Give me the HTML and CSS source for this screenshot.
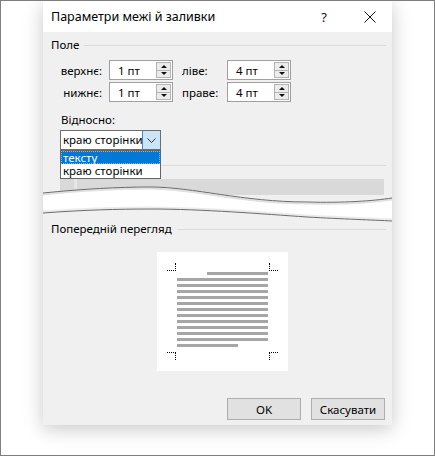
FILE: index.html
```html
<!DOCTYPE html>
<html lang="uk">
<head>
<meta charset="utf-8">
<title>Параметри межі й заливки</title>
<link rel="stylesheet" href="styles.css">
</head>
<body>
<div class="frame">
  <div class="dialog">
    <div class="titlebar">
      <span class="title">Параметри межі й заливки</span>
      <span class="help">?</span>
      <svg class="close" width="12" height="12" viewBox="0 0 12 12"><path d="M0.5 0.5 L11.5 11.5 M11.5 0.5 L0.5 11.5" stroke="#111" stroke-width="1" fill="none"/></svg>
    </div>
    <div class="upper">
      <div class="group-head"><span>Поле</span><i class="rule"></i></div>
      <div class="margins">
        <label class="lab-r">верхнє:</label>
        <div class="spin"><span>1 пт</span><div class="arrows"><b class="up"></b><b class="down"></b></div></div>
        <label class="lab-l">ліве:</label>
        <div class="spin"><span>4 пт</span><div class="arrows"><b class="up"></b><b class="down"></b></div></div>
        <label class="lab-r">нижнє:</label>
        <div class="spin"><span>1 пт</span><div class="arrows"><b class="up"></b><b class="down"></b></div></div>
        <label class="lab-l">праве:</label>
        <div class="spin"><span>4 пт</span><div class="arrows"><b class="up"></b><b class="down"></b></div></div>
      </div>
      <div class="rel-label">Відносно:</div>
      <div class="combo-wrap">
        <div class="combo">
          <span class="combo-text">краю сторінки</span>
          <span class="combo-btn"><svg width="9" height="5" viewBox="0 0 9 5"><path d="M0.5 0.5 L4.5 4.5 L8.5 0.5" stroke="#333" stroke-width="1" fill="none"/></svg></span>
        </div>
        <ul class="droplist">
          <li class="sel"><span>тексту</span></li>
          <li>краю сторінки</li>
        </ul>
      </div>
      <div class="sep"></div>
    </div>
    <svg class="tear" width="349" height="46" viewBox="0 0 349 46">
      <defs>
        <clipPath id="topclip"><path d="M0,0 H349 V22 C330,25 300,27 264,26 C200,26 150,11 107,11 C75,11 40,13 0,17 Z"/></clipPath>
      </defs>
      <path d="M0,0 H349 V22 C330,25 300,27 264,26 C200,26 150,11 107,11 C75,11 40,13 0,17 Z" fill="#f0f0f0"/>
      <g clip-path="url(#topclip)">
        <rect x="17" y="3" width="14" height="16" fill="#d9d9d9"/>
        <rect x="31" y="3" width="3" height="16" fill="#e6e6e6"/>
        <rect x="34" y="3" width="307" height="16" fill="#d9d9d9"/>
      </g>
      <path d="M0,18.5 C40,14.5 75,12.5 107,12.5 C150,12.5 200,27.5 264,27.5 C300,28.5 330,26.5 349,23.5" stroke="#000" stroke-opacity="0.12" stroke-width="2" fill="none"/>
      <path d="M0,17 C40,13 75,11 107,11 C150,11 200,26 264,26 C300,27 330,25 349,22" stroke="#6a6a6a" stroke-width="1" fill="none"/>
      <path d="M0,37 C40,34 75,33 107,33 C160,33 220,38 264,41 C300,43 330,44 349,45 V46 H0 Z" fill="#f0f0f0"/>
      <path d="M0,35.5 C40,32.5 75,31.5 107,31.5 C160,31.5 220,36.5 264,39.5 C300,41.5 330,42.5 349,43.5" stroke="#000" stroke-opacity="0.08" stroke-width="2" fill="none"/>
      <path d="M0,37 C40,34 75,33 107,33 C160,33 220,38 264,41 C300,43 330,44 349,45" stroke="#6a6a6a" stroke-width="1" fill="none"/>
    </svg>
    <div class="lower">
      <div class="group-head"><span>Попередній перегляд</span><i class="rule"></i></div>
      <div class="preview">
        <i class="corner tl"></i><i class="corner tr"></i><i class="corner bl"></i><i class="corner br"></i>
        <div class="lines">
          <i class="ln first"></i>
          <i class="ln"></i><i class="ln"></i><i class="ln"></i><i class="ln"></i><i class="ln"></i><i class="ln"></i>
          <i class="ln"></i><i class="ln"></i><i class="ln"></i><i class="ln"></i><i class="ln"></i>
          <i class="ln last"></i>
        </div>
      </div>
      <div class="buttons">
        <button class="btn">OK</button>
        <button class="btn">Скасувати</button>
      </div>
    </div>
  </div>
</div>
</body>
</html>
```

FILE: styles.css
```css
* { box-sizing: border-box; }
html, body { margin: 0; padding: 0; background: #fff; }
body {
  font-family: "Noto Sans", "Open Sans", sans-serif;
  font-size: 11.5px;
  color: #000;
}
.frame {
  width: 435px;
  height: 456px;
  border: 1px solid #7f7f7f;
  background: #fff;
  overflow: hidden;
  padding-left: 42px;
}
.dialog {
  width: 349px;
  height: 424px;
  display: flex;
  flex-direction: column;
  box-shadow: 0 4px 18px rgba(0,0,0,0.22);
  background: transparent;
}
.titlebar {
  height: 31px;
  background: #fff;
  display: flex;
  align-items: center;
  padding-left: 8px;
  flex: none;
}
.title { font-size: 12.5px; flex: 1; }
.help { font-size: 13px; margin-right: 37px; color: #111; }
.close { margin-right: 16px; }
.upper {
  background: #f0f0f0;
  height: 144px;
  padding: 6px 6px 0 8px;
  position: relative;
  flex: none;
}
.group-head {
  display: flex;
  align-items: center;
  height: 14px;
  line-height: 14px;
}
.group-head .rule {
  flex: 1;
  height: 1px;
  background: #dcdcdc;
  margin-left: 5px;
}
.margins {
  display: grid;
  grid-template-columns: 58px 64px 54px 64px;
  grid-auto-rows: 20px;
  row-gap: 2px;
  margin-top: 8px;
  align-items: center;
}
.lab-r { text-align: right; padding-right: 7px; }
.lab-l { padding-left: 9px; }
.spin {
  height: 20px;
  background: #fff;
  border: 1px solid #a0a0a0;
  display: flex;
  align-items: center;
  padding-left: 8px;
}
.spin span { flex: 1; }
.arrows {
  width: 15px;
  height: 16px;
  margin-right: 1px;
  border: 1px solid #b4b4b4;
  background: #ececec;
  display: flex;
  flex-direction: column;
}
.arrows b {
  flex: 1;
  display: flex;
  align-items: center;
  justify-content: center;
}
.arrows b.up { border-bottom: 1px solid #b4b4b4; }
.arrows b::after {
  content: "";
  width: 0; height: 0;
  border-left: 3px solid transparent;
  border-right: 3px solid transparent;
}
.arrows b.up::after { border-bottom: 3px solid #111; }
.arrows b.down::after { border-top: 3px solid #111; }
.rel-label {
  margin: 11px 0 0 10px;
  height: 14px;
  line-height: 14px;
}
.combo-wrap {
  position: relative;
  margin: 3px 0 0 9px;
  width: 101px;
}
.combo {
  height: 20px;
  border: 1px solid #6e6e6e;
  background: #fff;
  display: flex;
  align-items: stretch;
}
.combo-text {
  flex: 1;
  padding-left: 2px;
  line-height: 18px;
  white-space: nowrap;
  overflow: hidden;
}
.combo-btn {
  width: 18px;
  background: #cce4f7;
  border-left: 1px solid #3c8ad8;
  display: flex;
  align-items: center;
  justify-content: center;
}
.droplist {
  position: absolute;
  left: 0;
  top: 20px;
  width: 101px;
  margin: 0;
  padding: 0;
  list-style: none;
  background: #fff;
  border: 1px solid #646464;
  z-index: 2;
}
.droplist li {
  height: 13px;
  line-height: 13px;
  padding-left: 2px;
  white-space: nowrap;
}
.droplist li + li { height: 14px; line-height: 14px; }
.droplist li.sel {
  background: #0078d7;
  color: #fff;
  outline: 1px dotted #f5a623;
  outline-offset: -1px;
}
.sep {
  margin: 15px 0 0 9px;
  height: 1px;
  background: #dcdcdc;
}
.tear { display: block; flex: none; }
.lower {
  background: #f0f0f0;
  flex: 1;
  padding: 0 6px 0 8px;
  display: flex;
  flex-direction: column;
}
.preview {
  position: relative;
  width: 131px;
  height: 119px;
  background: #fff;
  margin: 16px 0 0 106px;
  padding: 20px 0 0 20px;
}
.lines {
  width: 91px;
  display: flex;
  flex-direction: column;
  gap: 3px;
}
.ln { display: block; height: 3px; background: #a6a6a6; }
.ln.first { width: 61px; align-self: flex-end; }
.ln.last { width: 61px; }
.corner {
  position: absolute;
  width: 9px;
  height: 8px;
  border: 0 dotted #000;
}
.corner.tl { left: 10px; top: 11px; border-right-width: 1px; border-bottom-width: 1px; }
.corner.tr { left: 112px; top: 11px; border-left-width: 1px; border-bottom-width: 1px; }
.corner.bl { left: 10px; top: 100px; border-right-width: 1px; border-top-width: 1px; }
.corner.br { left: 112px; top: 100px; border-left-width: 1px; border-top-width: 1px; }
.buttons {
  display: flex;
  justify-content: flex-end;
  gap: 10px;
  margin-top: 27px;
  padding-right: 1px;
}
.btn {
  width: 74px;
  height: 22px;
  background: #e1e1e1;
  border: 1px solid #adadad;
  font-family: "Noto Sans", "Open Sans", sans-serif;
  font-size: 11.5px;
  color: #000;
  padding: 0;
}
```
